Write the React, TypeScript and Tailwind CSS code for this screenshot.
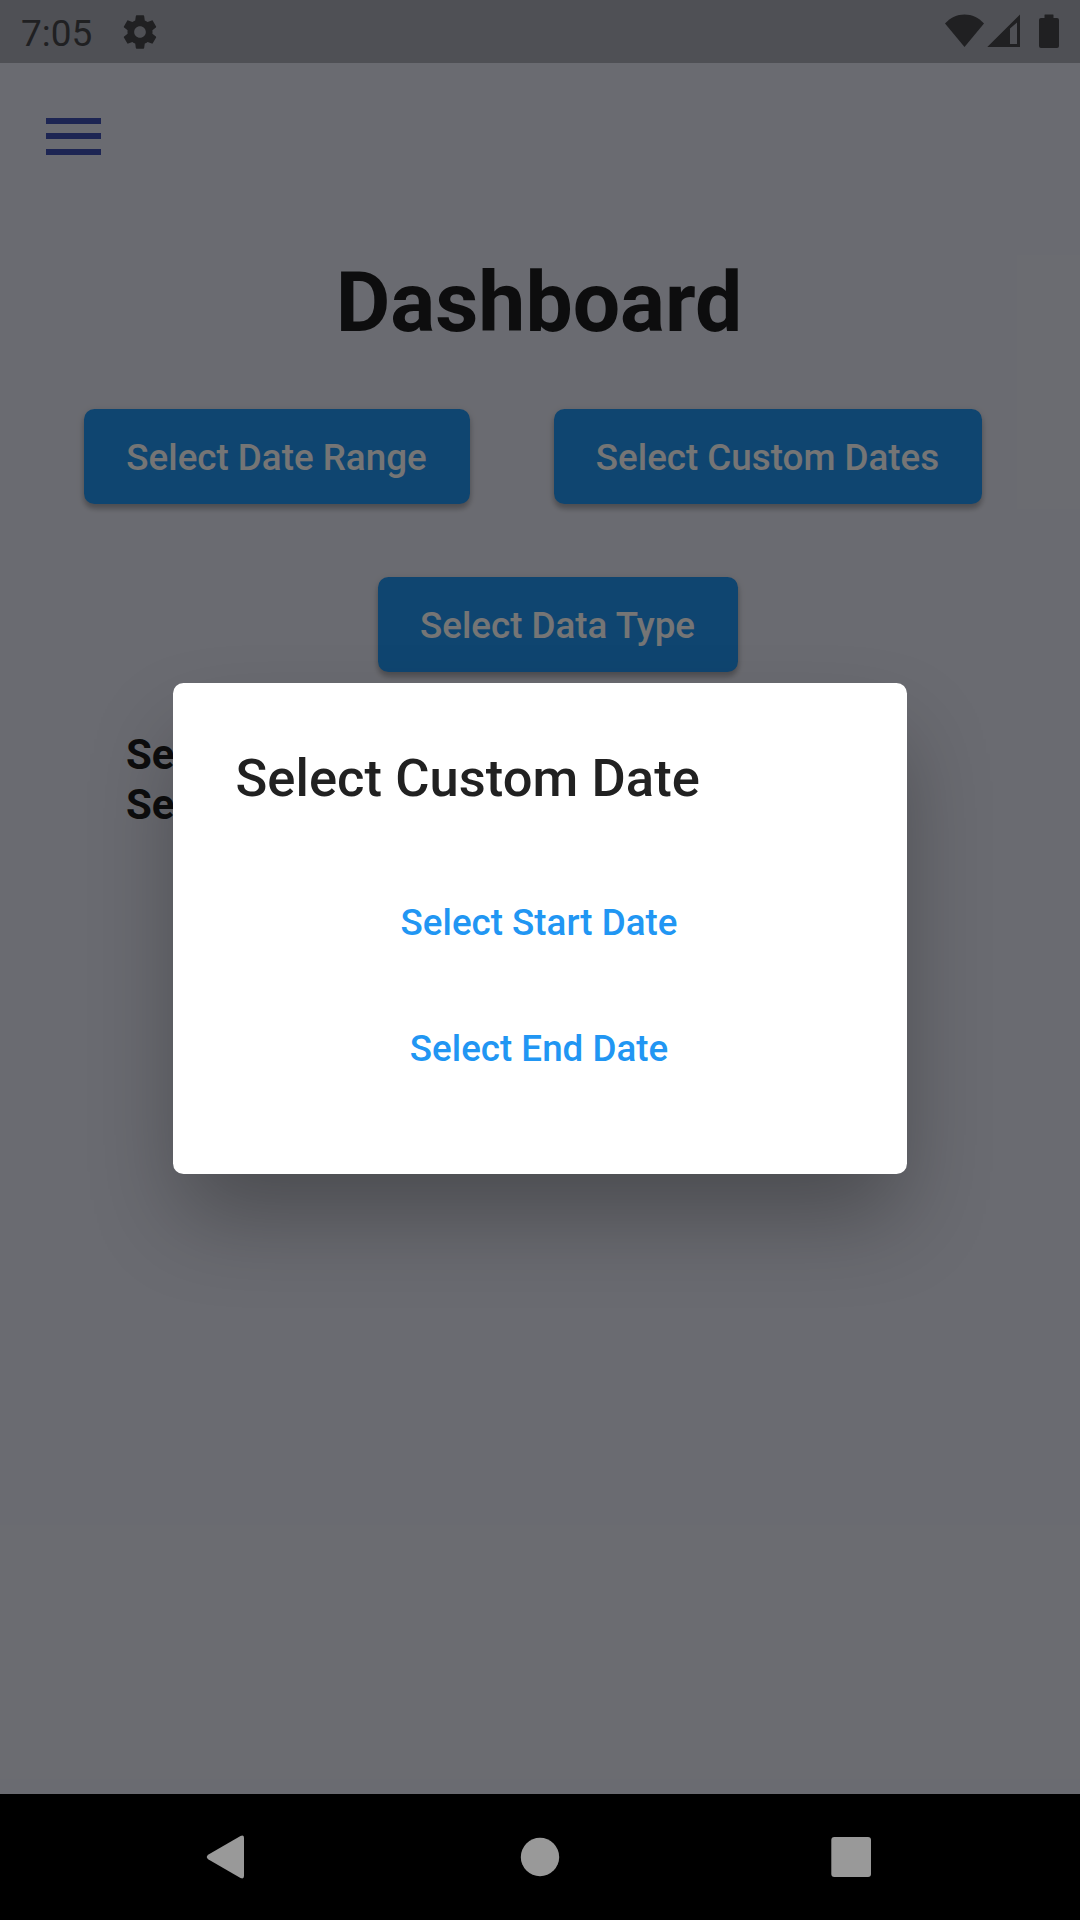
import React from "react";

function StatusBar() {
  return (
    <header className="flex h-[63px] items-center bg-[#4f5055] text-[#202022]">
      <span className="ml-[21px] w-[100px] pt-[3px] text-[37px] leading-[63px]">7:05</span>
      <svg className="ml-[-1px] h-[40px] w-[40px]" viewBox="0 0 24 24" fill="currentColor">
        <path d="M19.43 12.98c.04-.32.07-.64.07-.98s-.03-.66-.07-.98l2.11-1.65c.19-.15.24-.42.12-.64l-2-3.46c-.12-.22-.39-.3-.61-.22l-2.49 1c-.52-.4-1.08-.73-1.69-.98l-.38-2.65C14.46 2.18 14.25 2 14 2h-4c-.25 0-.46.18-.49.42l-.38 2.65c-.61.25-1.17.59-1.69.98l-2.49-1c-.23-.09-.49 0-.61.22l-2 3.46c-.13.22-.07.49.12.64l2.11 1.65c-.04.32-.07.65-.07.98s.03.66.07.98l-2.11 1.65c-.19.15-.24.42-.12.64l2 3.46c.12.22.39.3.61.22l2.49-1c.52.4 1.08.73 1.69.98l.38 2.65c.03.24.24.42.49.42h4c.25 0 .46-.18.49-.42l.38-2.65c.61-.25 1.17-.59 1.69-.98l2.49 1c.23.09.49 0 .61-.22l2-3.46c.12-.22.07-.49-.12-.64l-2.11-1.65zM12 15.5c-1.93 0-3.5-1.57-3.5-3.5s1.57-3.5 3.5-3.5 3.5 1.57 3.5 3.5-1.57 3.5-3.5 3.5z" />
      </svg>
      <svg className="mt-[-1px] ml-auto h-[36px] w-[116px]" viewBox="0 0 116 36" fill="currentColor">
        <path d="M1 10.5C6.500 4.500 13 1.500 20.500 1.500S34.500 4.500 40 10.500L20.500 34Z" />
        <path fillRule="evenodd" d="M43.300 34L76 1.500V34ZM66 15.500V31H73V9.500Z" />
        <path d="M103 1.500H109Q109.500 1.500 109.500 2V5H113Q115 5 115 7V33Q115 35 113 35H97Q95 35 95 33V7Q95 5 97 5H100.500V2Q100.500 1.500 101 1.500Z" />
      </svg>
      <div className="w-[20px]" />
    </header>
  );
}

function RaisedButton({ label, width }: { label: string; width: string }) {
  return (
    <button
      className={`${width} h-[95px] shrink-0 rounded-[10.5px] bg-[#2196f3] pt-[2px] pr-[1px] text-center text-[36.75px] font-medium whitespace-nowrap text-white shadow-[0_5px_5px_rgba(0,0,0,0.2),0_2px_9px_rgba(0,0,0,0.14)]`}
    >
      {label}
    </button>
  );
}

function Dashboard() {
  return (
    <main className="h-full bg-[#e8eaf6] pt-[1px] text-[#1e1e20]">
      <button className="mt-[54px] ml-[46px] flex w-[55px] flex-col gap-[9.300px]" aria-label="Menu">
        <span className="h-[6px] w-full bg-[#3f51b5]" />
        <span className="h-[6px] w-full bg-[#3f51b5]" />
        <span className="h-[6px] w-full bg-[#3f51b5]" />
      </button>
      <h1 className="mt-[99.400px] pr-[2px] text-center text-[84px] leading-[98px] font-bold">Dashboard</h1>
      <div className="mt-[57px] flex gap-[84px] pl-[84px]">
        <RaisedButton label="Select Date Range" width="w-[386px]" />
        <RaisedButton label="Select Custom Dates" width="w-[428px]" />
      </div>
      <div className="mt-[73px] pl-[378px]">
        <RaisedButton label="Select Data Type" width="w-[360px]" />
      </div>
      <div className="mt-[58px] ml-[126px] text-[42px] leading-[50px] font-bold">
        <p>Se</p>
        <p>Se</p>
      </div>
    </main>
  );
}

function CustomDateDialog() {
  return (
    <div className="absolute inset-0 bg-black/54">
      <section
        role="dialog"
        className="mx-auto mt-[620px] flex h-[491px] w-[734px] flex-col items-center rounded-[10.5px] bg-white shadow-[0_48px_90px_-8px_rgba(0,0,0,0.3)]"
      >
        <h2 className="w-full pt-[64px] pl-[62.500px] text-[52.5px] leading-[62px] font-medium tracking-[0.05px] text-[#212121]">
          Select Custom Date
        </h2>
        <button className="mt-[51px] mr-[2px] h-[126px] text-[36.75px] font-medium text-[#2196f3]">
          Select Start Date
        </button>
        <button className="mr-[2px] h-[126px] text-[36.75px] font-medium text-[#2196f3]">Select End Date</button>
      </section>
    </div>
  );
}

function NavigationBar() {
  return (
    <nav className="flex h-[126px] items-center bg-black">
      <svg className="h-[126px] w-full" viewBox="0 0 1080 126" fill="#999999">
        <path d="M208.500 60.500L240.500 42Q244 40.500 244 44V82Q244 85.500 240.500 84L208.500 65.500Q205 63 208.500 60.500Z" />
        <circle cx="540" cy="63" r="19.200" />
        <rect x="831.300" y="43" width="39.700" height="40" rx="3" />
      </svg>
    </nav>
  );
}

export default function App() {
  return (
    <div className="flex h-[1920px] w-[1080px] flex-col overflow-hidden font-[Roboto,sans-serif]">
      <StatusBar />
      <div className="relative h-[1731px]">
        <Dashboard />
        <CustomDateDialog />
      </div>
      <NavigationBar />
    </div>
  );
}
